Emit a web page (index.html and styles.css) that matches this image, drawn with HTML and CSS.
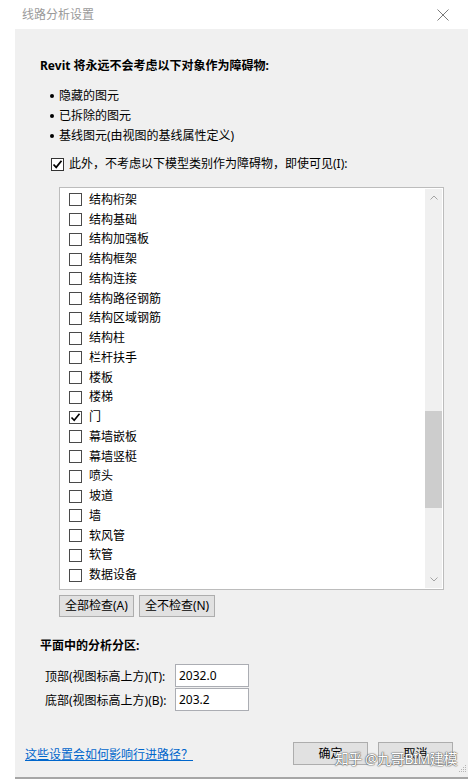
FILE: index.html
```html
<!DOCTYPE html>
<html lang="zh-CN">
<head>
  <meta charset="UTF-8" />
  <title>线路分析设置</title>
  <link rel="stylesheet" href="styles.css">
</head>
<body>
  <div class="titlebar">
    <span class="title">线路分析设置</span>
    <svg class="close" width="12" height="12" viewBox="0 0 12 12">
      <path d="M0.5 0.5 L11.5 11.5 M11.5 0.5 L0.5 11.5" stroke="#7a7a7a" stroke-width="1" fill="none"/>
    </svg>
  </div>

  <div class="dialog">
    <div class="content">
      <p class="heading">Revit 将永远不会考虑以下对象作为障碍物:</p>
      <ul class="bullets">
        <li>隐藏的图元</li>
        <li>已拆除的图元</li>
        <li>基线图元(由视图的基线属性定义)</li>
      </ul>

      <div class="check-row">
        <span class="box dark">
          <svg width="11" height="11" viewBox="0 0 11 11"><path d="M1.5 5.5 L4.2 8.3 L9.5 1.8" stroke="#000" stroke-width="1.8" fill="none"/></svg>
        </span>
        <span>此外，不考虑以下模型类别作为障碍物，即使可见(I):</span>
      </div>

      <div class="listbox">
        <div class="items">
          <div class="item"><span class="box"></span>结构桁架</div>
          <div class="item"><span class="box"></span>结构基础</div>
          <div class="item"><span class="box"></span>结构加强板</div>
          <div class="item"><span class="box"></span>结构框架</div>
          <div class="item"><span class="box"></span>结构连接</div>
          <div class="item"><span class="box"></span>结构路径钢筋</div>
          <div class="item"><span class="box"></span>结构区域钢筋</div>
          <div class="item"><span class="box"></span>结构柱</div>
          <div class="item"><span class="box"></span>栏杆扶手</div>
          <div class="item"><span class="box"></span>楼板</div>
          <div class="item"><span class="box"></span>楼梯</div>
          <div class="item"><span class="box"><svg width="11" height="11" viewBox="0 0 11 11"><path d="M1.5 5.5 L4.2 8.3 L9.5 1.8" stroke="#000" stroke-width="1.6" fill="none"/></svg></span>门</div>
          <div class="item"><span class="box"></span>幕墙嵌板</div>
          <div class="item"><span class="box"></span>幕墙竖梃</div>
          <div class="item"><span class="box"></span>喷头</div>
          <div class="item"><span class="box"></span>坡道</div>
          <div class="item"><span class="box"></span>墙</div>
          <div class="item"><span class="box"></span>软风管</div>
          <div class="item"><span class="box"></span>软管</div>
          <div class="item"><span class="box"></span>数据设备</div>
          <div class="item"><span class="box"></span>天花板</div>
        </div>
        <div class="scrollbar">
          <div class="arrow">
            <svg width="8" height="5" viewBox="0 0 8 5"><path d="M0.5 4.5 L4 1 L7.5 4.5" stroke="#a3a3a3" stroke-width="1" fill="none"/></svg>
          </div>
          <div class="track"><div class="thumb"></div></div>
          <div class="arrow">
            <svg width="8" height="5" viewBox="0 0 8 5"><path d="M0.5 0.5 L4 4 L7.5 0.5" stroke="#a3a3a3" stroke-width="1" fill="none"/></svg>
          </div>
        </div>
      </div>

      <div class="actions">
        <button class="btn">全部检查(A)</button>
        <button class="btn">全不检查(N)</button>
      </div>

      <p class="section">平面中的分析分区:</p>
      <div class="fields">
        <label>顶部(视图标高上方)(T):</label>
        <div class="field">2032.0</div>
        <label>底部(视图标高上方)(B):</label>
        <div class="field">203.2</div>
      </div>
    </div>

    <div class="footer">
      <a class="link" href="#">这些设置会如何影响行进路径？</a>
      <button class="btn wide">确定</button>
      <button class="btn wide">取消</button>
    </div>

    <div class="watermark">知乎 @九哥BIM建模</div>
    <svg class="grip" width="9" height="9" viewBox="0 0 9 9">
      <g fill="#b5b5b5">
        <rect x="7" y="1" width="1" height="1"/>
        <rect x="5" y="3" width="1" height="1"/><rect x="7" y="3" width="1" height="1"/>
        <rect x="3" y="5" width="1" height="1"/><rect x="5" y="5" width="1" height="1"/><rect x="7" y="5" width="1" height="1"/>
        <rect x="1" y="7" width="1" height="1"/><rect x="3" y="7" width="1" height="1"/><rect x="5" y="7" width="1" height="1"/><rect x="7" y="7" width="1" height="1"/>
      </g>
    </svg>
  </div>
</body>
</html>
```

FILE: styles.css
```css
body {
  margin: 0;
  background: #ffffff;
  font-family: "Noto Sans", "Noto Sans CJK SC", sans-serif;
  font-size: 12px;
  color: #000;
}
.titlebar {
  height: 29px;
  display: flex;
  align-items: center;
  justify-content: space-between;
  padding: 0 19px 0 22px;
}
.title {
  color: #9a9a9a;
  line-height: 16px;
}
.dialog {
  margin-left: 15px;
  height: 748px;
  background: #f0f0f0;
  border-bottom: 2px solid #a6a6a6;
  display: flex;
  flex-direction: column;
  position: relative;
}
.content {
  padding: 29px 24px 0 25px;
}
.heading {
  margin: 0;
  font-weight: bold;
  line-height: 16px;
}
.bullets {
  list-style: none;
  margin: 12px 0 0 10px;
  padding: 0;
}
.bullets li {
  line-height: 20px;
  display: flex;
  align-items: center;
  gap: 5px;
}
.bullets li::before {
  content: "";
  width: 4px;
  height: 4px;
  border-radius: 50%;
  background: #000;
}
.check-row {
  display: flex;
  align-items: center;
  gap: 5px;
  margin: 10px 0 0 11px;
  line-height: 16px;
}
.box {
  width: 11px;
  height: 11px;
  border: 1px solid #4a4a4a;
  background: #fff;
  display: flex;
  align-items: center;
  justify-content: center;
  flex: none;
}
.box.dark {
  border-color: #333;
}
.listbox {
  box-sizing: border-box;
  margin: 15px 0 0 19px;
  height: 403px;
  border: 1px solid #bcbcbc;
  background: #fff;
  padding: 1px;
  display: flex;
}
.items {
  flex: 1;
  overflow: hidden;
  padding-top: 1px;
}
.item {
  height: 19.75px;
  display: flex;
  align-items: center;
  gap: 7px;
  padding-left: 8px;
  line-height: 16px;
}
.scrollbar {
  width: 17px;
  background: #f0f0f0;
  display: flex;
  flex-direction: column;
}
.arrow {
  height: 17px;
  display: flex;
  align-items: center;
  justify-content: center;
}
.track {
  flex: 1;
}
.thumb {
  margin-top: 205px;
  height: 97px;
  background: #cdcdcd;
}
.actions {
  display: flex;
  gap: 5px;
  margin: 5px 0 0 19px;
}
.btn {
  height: 22px;
  padding: 0 5px;
  border: 1px solid #adadad;
  background: #e1e1e1;
  font: inherit;
  color: #000;
  line-height: 16px;
}
.section {
  margin: 21px 0 0 0;
  font-weight: bold;
  line-height: 16px;
}
.fields {
  display: grid;
  grid-template-columns: 130px 74px;
  row-gap: 1px;
  margin: 10px 0 0 5px;
}
.fields label {
  align-self: center;
}
.field {
  box-sizing: border-box;
  height: 23px;
  border: 1px solid #abadb3;
  background: #fff;
  padding: 0 3px;
  display: flex;
  align-items: center;
}
.footer {
  margin-top: auto;
  margin-bottom: 12px;
  display: flex;
  align-items: center;
  gap: 10px;
  padding: 0 15px 0 10px;
}
.link {
  color: #0066cc;
  text-decoration: underline;
  margin-right: auto;
}
.btn.wide {
  width: 75px;
  height: 23px;
}
.watermark {
  position: absolute;
  right: 11px;
  bottom: 9px;
  font-size: 14px;
  color: #fff;
  letter-spacing: -0.4px;
  text-shadow: 0 0 1px #555, 0 0 1px #555, 0 0 2px #777;
}
.grip {
  position: absolute;
  right: 1px;
  bottom: 4px;
}
```
